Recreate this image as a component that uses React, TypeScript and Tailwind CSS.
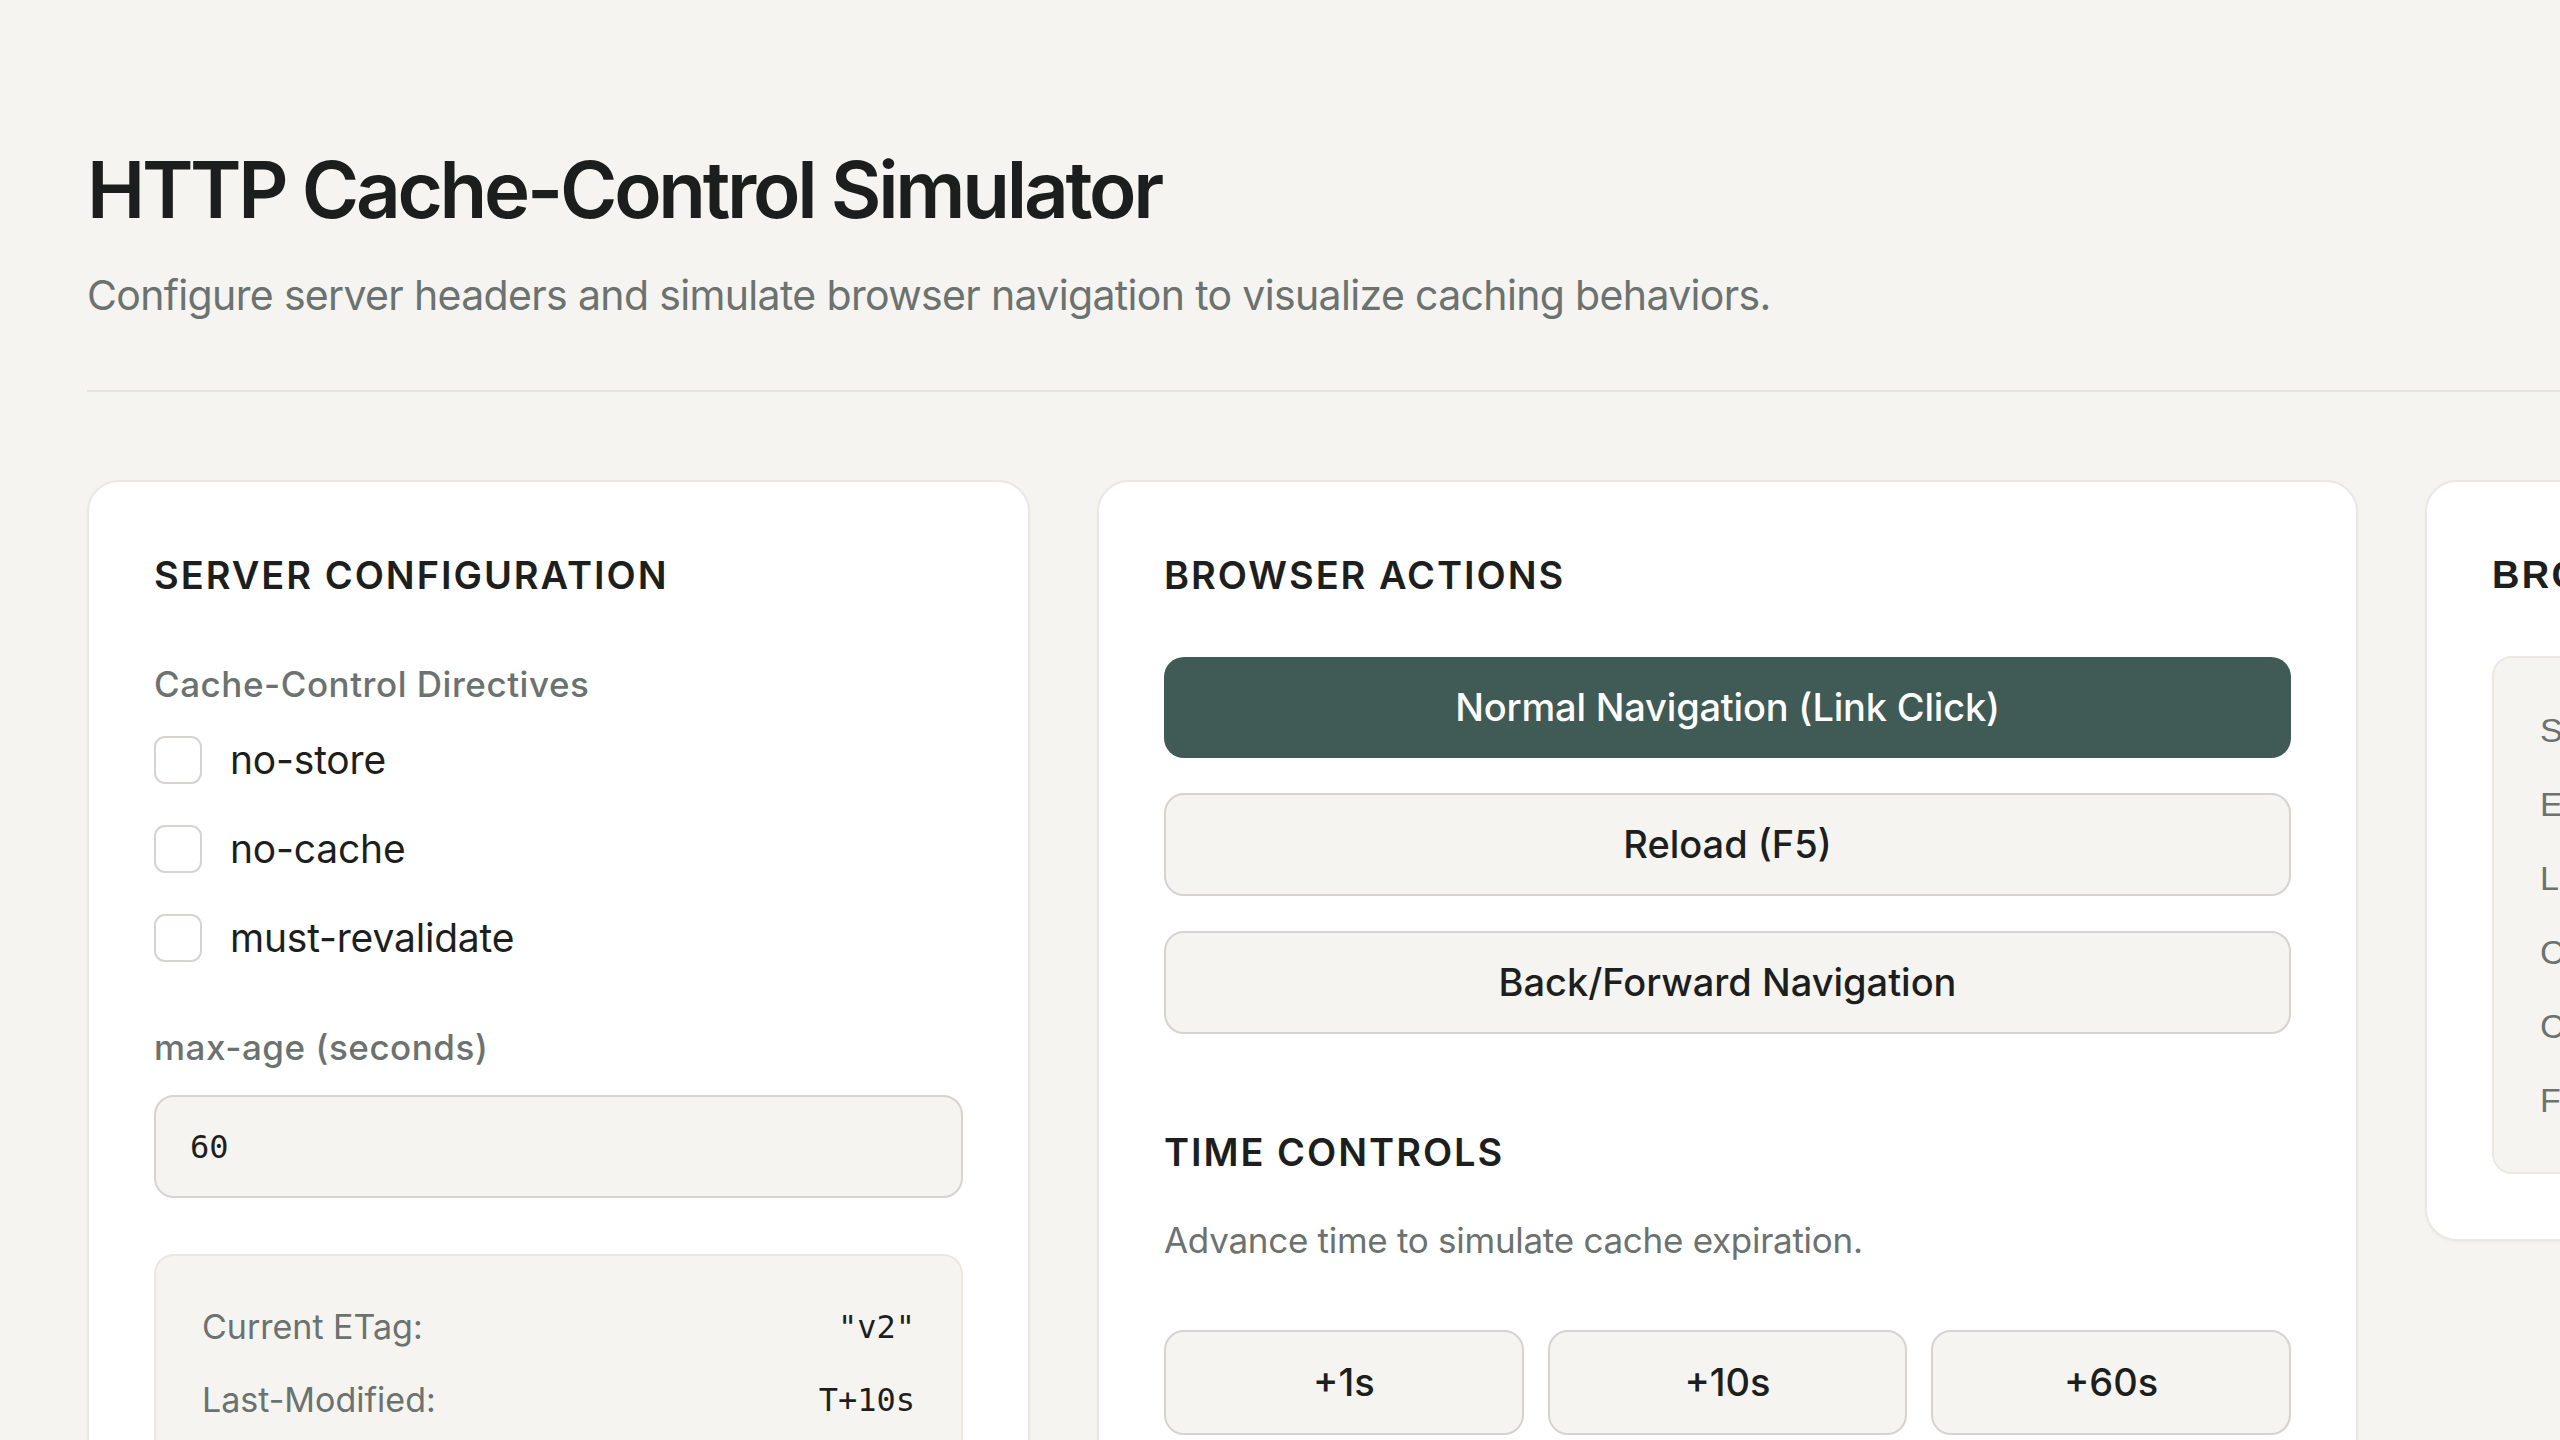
import React from "react";

const sans = "font-['Inter','Noto_Sans',sans-serif]";

function Heading({ children }: { children: React.ReactNode }) {
  return (
    <h2 className="text-[38px] leading-[56px] font-semibold tracking-[0.052em] text-[#1d1f1e]">
      {children}
    </h2>
  );
}

function Check({ label }: { label: string }) {
  return (
    <label className="flex h-[48px] items-center gap-[28px]">
      <span className="h-[48px] w-[48px] shrink-0 rounded-[11px] border-[2.5px] border-[#d6d3d1] bg-white" />
      <span className="text-[39px] leading-[48px] tracking-[-0.005em] text-[#1d1f1e]">{label}</span>
    </label>
  );
}

function SecBtn({ children, className = "" }: { children: React.ReactNode; className?: string }) {
  return (
    <button
      className={`flex items-center justify-center rounded-[20px] border-[2.5px] border-[#d6d3d1] bg-[#f5f4f0] text-[38px] font-medium text-[#1d1f1e] ${className}`}
    >
      {children}
    </button>
  );
}

export default function App() {
  return (
    <div className={`h-screen w-full overflow-hidden bg-[#f5f4f0] ${sans}`}>
      <div className="pl-[87px] pt-[146px]">
        <h1 className="text-[78px] leading-[88px] font-semibold tracking-[-0.042em] text-[#1c1e1d]">
          HTTP Cache-Control Simulator
        </h1>
        <p className="mt-[33px] text-[41px] leading-[56px] tracking-[-0.016em] text-[#6b726f]">
          Configure server headers and simulate browser navigation to visualize caching behaviors.
        </p>
        <div className="mt-[67px] h-[2px] w-full bg-[#e7e4de]" />

        <div className="mt-[88px] flex items-start gap-[67px]">
          {/* Server configuration */}
          <section className="w-[943px] shrink-0 rounded-[32px] border-2 border-[#ebe8e2] bg-white p-[65px] shadow-[0_1px_3px_rgba(0,0,0,0.04)]">
            <Heading>SERVER CONFIGURATION</Heading>
            <div className="mt-[57px] text-[35px] leading-[48px] font-medium tracking-[0.015em] text-[#6b726f]">
              Cache-Control Directives
            </div>
            <div className="mt-[28px] flex flex-col gap-[41px]">
              <Check label="no-store" />
              <Check label="no-cache" />
              <Check label="must-revalidate" />
            </div>
            <div className="mt-[61px] text-[35px] leading-[48px] font-medium tracking-[0.015em] text-[#6b726f]">
              max-age (seconds)
            </div>
            <div className="mt-[24px] flex h-[103px] items-center rounded-[20px] border-[2.5px] border-[#d6d3d1] bg-[#f5f4f0] pl-[34px] font-['DejaVu_Sans_Mono',monospace] text-[32px] text-[#1d1f1e]">
              60
            </div>
            <div className="mt-[56px] flex flex-col gap-[25px] rounded-[20px] border-2 border-[#ebe8e2] bg-[#f5f4f0] px-[46px] py-[47px]">
              {[
                ["Current ETag:", '"v2"'],
                ["Last-Modified:", "T+10s"],
                ["Server Time:", "T+10s"],
              ].map(([k, v]) => (
                <div key={k} className="flex items-center justify-between">
                  <span className="text-[34px] leading-[48px] text-[#6b726f]">{k}</span>
                  <span className="font-['DejaVu_Sans_Mono',monospace] text-[32px] leading-[48px] text-[#1d1f1e]">
                    {v}
                  </span>
                </div>
              ))}
            </div>
          </section>

          {/* Browser actions */}
          <section className="w-[1261px] shrink-0 rounded-[32px] border-2 border-[#ebe8e2] bg-white p-[65px] shadow-[0_1px_3px_rgba(0,0,0,0.04)]">
            <Heading>BROWSER ACTIONS</Heading>
            <div className="mt-[54px] flex flex-col gap-[35px]">
              <button className="flex h-[101px] items-center justify-center rounded-[20px] bg-[#405a56] text-[38px] font-medium tracking-[-0.005em] text-white">
                Normal Navigation (Link Click)
              </button>
              <SecBtn className="h-[103px]">Reload (F5)</SecBtn>
              <SecBtn className="h-[103px]">Back/Forward Navigation</SecBtn>
            </div>
            <div className="mt-[90px]">
              <Heading>TIME CONTROLS</Heading>
            </div>
            <p className="mt-[36px] text-[35px] leading-[48px] tracking-[-0.008em] text-[#6b726f]">
              Advance time to simulate cache expiration.
            </p>
            <div className="mt-[66px] grid grid-cols-3 gap-[24px]">
              <SecBtn className="h-[105px]">+1s</SecBtn>
              <SecBtn className="h-[105px]">+10s</SecBtn>
              <SecBtn className="h-[105px]">+60s</SecBtn>
            </div>
            <div className="mt-[40px] text-[34px] leading-[48px] text-[#6b726f]">Current time: T+10s</div>
          </section>

          {/* Browser cache */}
          <section className="w-[1100px] shrink-0 rounded-[32px] border-2 border-[#ebe8e2] bg-white p-[65px] font-['Liberation_Sans',Arial,sans-serif] shadow-[0_1px_3px_rgba(0,0,0,0.04)]">
            <h2 className="text-[38px] leading-[56px] font-bold tracking-[0.06em] text-[#1d1f1e]">
              BROWSER CACHE
            </h2>
            <div className="mt-[53px] flex flex-col gap-[26px] rounded-[20px] border-2 border-[#ebe8e2] bg-[#f5f4f0] px-[46px] py-[48px]">
              {[
                ["Status:", "Cached"],
                ["ETag:", '"v1"'],
                ["Last-Modified:", "T+0s"],
                ["Cached At:", "T+0s"],
                ["Cache-Control:", "max-age=60"],
                ["Freshness:", "Fresh"],
              ].map(([k, v]) => (
                <div key={k} className="flex items-center justify-between">
                  <span className="text-[34px] leading-[48px] text-[#6b726f]">{k}</span>
                  <span className="font-['DejaVu_Sans_Mono',monospace] text-[32px] leading-[48px] text-[#1d1f1e]">
                    {v}
                  </span>
                </div>
              ))}
            </div>
          </section>
        </div>
      </div>
    </div>
  );
}
